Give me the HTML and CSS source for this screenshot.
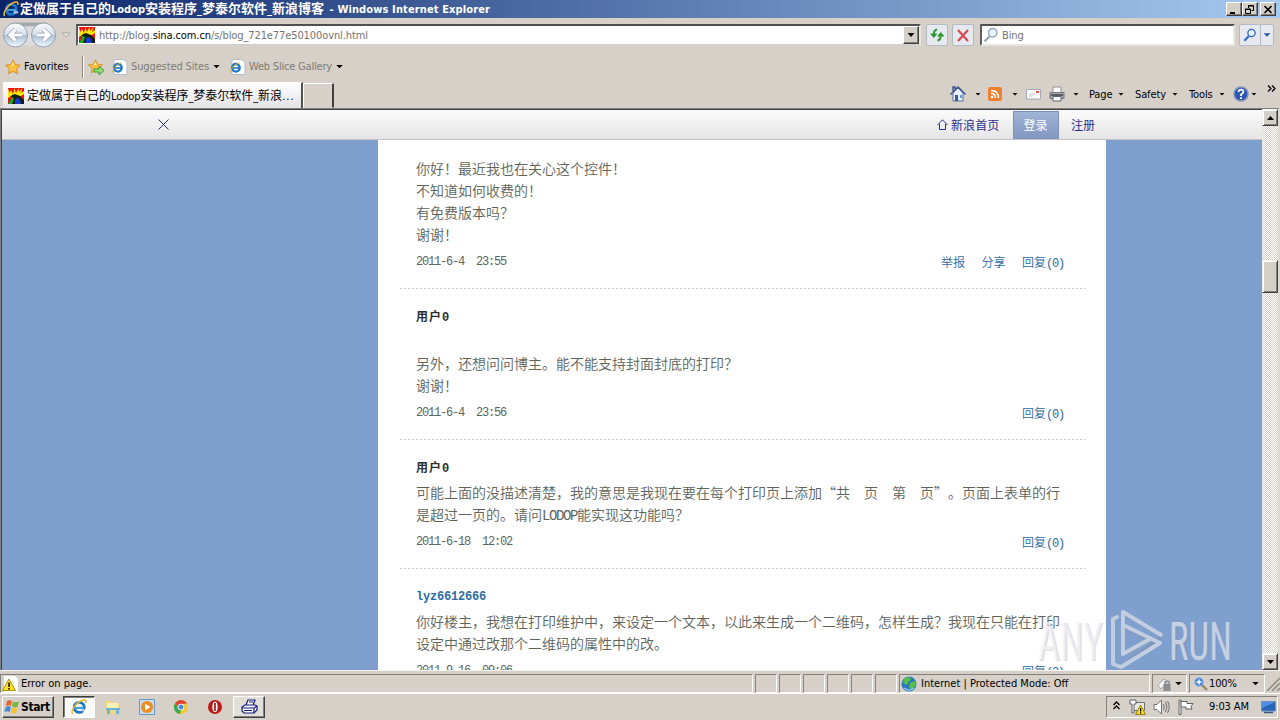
FILE: index.html
```html
<!DOCTYPE html>
<html lang="zh-CN">
<head>
<meta charset="utf-8">
<title>定做属于自己的Lodop安装程序</title>
<link rel="stylesheet" href="styles.css">
</head>
<body>
<svg class="defs" width="0" height="0">
  <symbol id="ie" viewBox="0 0 16 16">
    <circle cx="8.2" cy="8.4" r="5" fill="none" stroke="#1c78c8" stroke-width="2.8"/>
    <path d="M4 9h9" stroke="#3ea0e0" stroke-width="2.2"/>
    <path d="M10.3 10.2h5v2.2h-4.5z" fill="#fff" opacity=".65"/>
    <path d="M1.6 15C-.6 12 4.500 4.500 9.500 2 13 .3 16 .6 14.600 4" fill="none" stroke="#f0b828" stroke-width="1.500"/>
  </symbol>
  <symbol id="iepage" viewBox="0 0 16 16">
    <path d="M2 .5h9.500l3.500 3v12H2z" fill="#fff" stroke="#b4bcc8"/>
    <circle cx="5.900" cy="8.800" r="3.800" fill="none" stroke="#1c78c8" stroke-width="2.300"/>
    <path d="M3 9h6.500" stroke="#1c78c8" stroke-width="1.600"/>
    <path d="M.8 13.500C-.2 11 4 5 9.500 4" fill="none" stroke="#e8b020" stroke-width="1"/>
  </symbol>
  <symbol id="lodop" viewBox="0 0 16 16">
    <path d="M0 0h16v16H0z" fill="#f01010"/>
    <path d="M0 0l1.500 5L3 2l2 4 1.500-6L8 5l2.500-5 .5 4L14.500 0 13 5l3-2v3l-3 2H4L0 10z" fill="#ffe800"/>
    <path d="M0 16v-4l4-5 3-1 5 2 4 4v4z" fill="#102010"/>
    <path d="M0 16l3-7 3 1-2 6z" fill="#10b020"/>
    <path d="M7 16v-4q2-4 5 0l1 4z" fill="#1838d8"/>
    <path d="M0 11l3-3v3l-3 5z" fill="#e81010"/>
  </symbol>
  <symbol id="star" viewBox="0 0 16 16">
    <path d="M8 .8l2.200 4.800 5.200.6-3.900 3.500 1.100 5.200L8 12.300l-4.600 2.600 1.100-5.200L.6 6.200l5.200-.6z" fill="#fcc040" stroke="#d89030"/>
    <path d="M8 3l1.200 3.500H6z" fill="#fff0a0"/>
  </symbol>
  <symbol id="lens" viewBox="0 0 16 16">
    <path d="M6.500 9.500L1.500 14.500" stroke="currentColor" stroke-width="2.400"/>
    <circle cx="9.700" cy="5.700" r="4.200" fill="#eaf4fc" stroke="currentColor" stroke-width="1.500"/>
  </symbol>
</svg>

<header class="titlebar">
  <svg class="i16"><use href="#ie"/></svg>
  <h1 class="title"><span class="han">定做属于自己的</span>Lodop<span class="han">安装程序</span>_<span class="han">梦泰尔软件</span>_<span class="han">新浪博客</span><span class="app"> - Windows Internet Explorer</span></h1>
  <div class="winbtns">
    <span class="wbtn"><svg width="10" height="9"><path d="M1 7h5v2H1z"/></svg></span>
    <span class="wbtn"><svg width="10" height="9" fill="none" stroke="#000"><path d="M3.500 3V.5h5v5H6.500M3 1h6M.5 4.500h5v4h-5zM0 4h6"/></svg></span>
    <span class="wbtn gap"><svg width="10" height="9" stroke="#000" stroke-width="1.700"><path d="M1.500 1l7 7M8.500 1l-7 7"/></svg></span>
  </div>
</header>

<nav class="navrow">
  <svg class="backfwd" width="72" height="28" viewBox="0 0 72 28">
    <defs><linearGradient id="orb" x1="0" y1="0" x2="0" y2="1"><stop offset="0" stop-color="#fdfdfe"/><stop offset=".48" stop-color="#d6dde8"/><stop offset=".52" stop-color="#b0c0d6"/><stop offset="1" stop-color="#eefaff"/></linearGradient></defs>
    <path d="M13 1.500h32L40 6q-9-2-22 0z" fill="#a4a8b0"/>
    <path d="M18 6h22v16q-11 6-22 0z" fill="#dcdde0"/>
    <circle cx="14.500" cy="14" r="12" fill="url(#orb)" stroke="#949fb0"/>
    <circle cx="42.500" cy="14" r="12" fill="url(#orb)" stroke="#949fb0"/>
    <path d="M21 14H9.500M14.500 8.500L9 14l5.500 5.500M36 14H47.500M42.500 8.500l5.500 5.500-5.500 5.500" fill="none" stroke="#8898b4" stroke-width="4.500"/>
    <path d="M21 14H9.500M14.500 8.500L9 14l5.500 5.500M36 14H47.500M42.500 8.500l5.500 5.500-5.500 5.500" fill="none" stroke="#fff" stroke-width="3.200"/>
    <path d="M61 12h8l-4 4z" fill="#e8e6e2" stroke="#aaa8a2"/>
  </svg>
  <div class="address">
    <svg class="i16"><use href="#lodop"/></svg>
    <span class="url">http://blog.<b>sina.com.cn</b>/s/blog_721e77e50100ovnl.html</span>
    <span class="drop"><i class="caret"></i></span>
  </div>
  <span class="tool refresh"><svg width="16" height="16" fill="none" stroke="#2c9a30" stroke-width="2"><path d="M5 8Q4.500 3 8 2.500M11.500 8q.5 5-3 5.500"/><path d="M1 6.500h7.500L4.800 11zM8 9.500h7.500L11.800 5z" fill="#2c9a30" stroke="none"/></svg></span>
  <span class="tool stop"><svg width="16" height="16" stroke="#d84850" stroke-width="2.200"><path d="M3 3l10 11M13 3L3 14"/></svg></span>
  <div class="search"><svg class="i16 pale"><use href="#lens"/></svg><span>Bing</span></div>
  <span class="tool go"><svg class="i14 blue"><use href="#lens"/></svg></span>
  <span class="tool godrop"><i class="caret small navy"></i></span>
</nav>

<div class="favrow">
  <svg class="i16"><use href="#star"/></svg><span class="favlabel">Favorites</span>
  <i class="vline"></i>
  <svg class="i16 addfav" viewBox="0 0 16 16"><use href="#star" width="15" height="15"/><path d="M6 10h5V7l5 4.500-5 4.500v-3H6z" fill="#90e070" stroke="#3c9a38"/></svg>
  <svg class="i16 sug"><use href="#iepage"/></svg><span class="dim w1">Suggested Sites</span><i class="caret small"></i>
  <svg class="i16 web"><use href="#iepage"/></svg><span class="dim w2">Web Slice Gallery</span><i class="caret small"></i>
</div>

<div class="tabrow">
  <div class="tab"><svg class="i16"><use href="#lodop"/></svg><span><span class="han">定做属于自己的</span>Lodop<span class="han">安装程序</span>_<span class="han">梦泰尔软件</span>_<span class="han">新浪</span><span class="dots">...</span></span></div>
  <div class="newtab"></div>
  <div class="commands">
    <div class="cmd c-home"><svg class="i16" viewBox="0 0 16 16"><path d="M3 7v8h10V7L8 2z" fill="#e8f0fa" stroke="#5870a8"/><path d="M.5 8.500L8 1l7.500 7.500M3 5V1h2v2" fill="none" stroke="#405898" stroke-width="1.500"/><path d="M5 9h3v6H5z" fill="#405a98"/><path d="M10 9h2v3h-2z" fill="#58a0e0"/></svg><i class="caret mini"></i></div>
    <div class="cmd c-rss"><svg class="i14" viewBox="0 0 14 14"><rect width="14" height="14" rx="2" fill="#ee8130"/><path d="M3 6.500Q7.500 6.500 7.500 11M3 3.500Q10.500 3.500 10.500 11" fill="none" stroke="#fff" stroke-width="1.600"/><circle cx="4" cy="10" r="1.300" fill="#fff"/></svg><i class="caret mini"></i></div>
    <div class="cmd c-mail"><svg width="15" height="11"><path d="M.5.5h14v9.500H.5z" fill="#fbfbfd" stroke="#a8a8b4"/><path d="M3 5h6M3 7h4" stroke="#c8c8d4"/><path d="M10 2h3v2h-3z" fill="#e05050"/></svg></div>
    <div class="cmd c-print"><svg class="i16" viewBox="0 0 16 16"><path d="M4 1h8v6H4z" fill="#fff" stroke="#909090"/><path d="M1 6.500h14v6H1z" fill="#a4a8ae" stroke="#74787e"/><path d="M2 9h12" stroke="#404448" stroke-width="1.500"/><path d="M4 10.500h8v4.500H4z" fill="#f4f8fc" stroke="#606870"/></svg><i class="caret mini"></i></div>
    <div class="cmd c-page"><span>Page</span><i class="caret mini"></i></div>
    <div class="cmd c-safety"><span>Safety</span><i class="caret mini"></i></div>
    <div class="cmd c-tools"><span>Tools</span><i class="caret mini"></i></div>
    <div class="cmd c-help"><svg class="i16" viewBox="0 0 16 16"><circle cx="8" cy="8" r="7" fill="#2c58b4" stroke="#8496b8" stroke-width="1.500"/><path d="M5.500 6Q5.700 3.600 8 3.600t2.400 2.200Q10.400 7.200 8 8.500V10" fill="none" stroke="#fff" stroke-width="1.800"/><path d="M7 11.200h2V13H7z" fill="#fff"/></svg><i class="caret mini"></i></div>
    <svg class="more" width="9" height="7" fill="none" stroke="#000" stroke-width="1.300"><path d="M1 .5l3 3-3 3M5 .5l3 3-3 3"/></svg>
  </div>
</div>

<div class="viewport">
  <div class="page">
    <div class="sinabar">
      <svg class="close" width="11" height="11" stroke="#2b2f8c"><path d="M.5.5l10 10M10.500.5l-10 10"/></svg>
      <svg class="house" width="11" height="11" fill="none" stroke="#2b2f8c"><path d="M.5 6L5.500.8 10.500 6M2.500 5v5.500h6V5"/></svg>
      <a class="home">新浪首页</a>
      <a class="login">登录</a>
      <a class="reg">注册</a>
    </div>
    <main class="comments">
      <article class="comment first">
        <div class="text">你好！最近我也在关心这个控件！<br>不知道如何收费的！<br>有免费版本吗？<br>谢谢！</div>
        <div class="meta"><time>2011-6-4&nbsp; 23:55</time><span class="links"><a>举报</a><a>分享</a><a>回复<em>(0)</em></a></span></div>
      </article>
      <article class="comment">
        <div class="name">用户<em>0</em></div>
        <div class="text"><br>另外，还想问问博主。能不能支持封面封底的打印？<br>谢谢！</div>
        <div class="meta"><time>2011-6-4&nbsp; 23:56</time><span class="links"><a>回复<em>(0)</em></a></span></div>
      </article>
      <article class="comment">
        <div class="name">用户<em>0</em></div>
        <div class="text">可能上面的没描述清楚，我的意思是我现在要在每个打印页上添加“共　页　第　页”。页面上表单的行<br>是超过一页的。请问<em>LODOP</em>能实现这功能吗？</div>
        <div class="meta"><time>2011-6-18&nbsp; 12:02</time><span class="links"><a>回复<em>(0)</em></a></span></div>
      </article>
      <article class="comment">
        <div class="name member"><em>lyz6612666</em></div>
        <div class="text">你好楼主，我想在打印维护中，来设定一个文本，以此来生成一个二维码，怎样生成？我现在只能在打印<br>设定中通过改那个二维码的属性中的改。</div>
        <div class="meta"><time>2011-9-16&nbsp; 09:06</time><span class="links"><a>回复<em>(2)</em></a></span></div>
      </article>
    </main>
  </div>
  <div class="scroll">
    <span class="sbtn"><svg width="7" height="4"><path d="M0 4h7L3.500 0z"/></svg></span>
    <span class="thumb"></span>
    <span class="sbtn end"><svg width="7" height="4"><path d="M0 0h7L3.500 4z"/></svg></span>
  </div>
  <svg class="watermark" width="200" height="61" viewBox="0 0 200 61">
    <g class="shade">
      <text x="2" y="52" textLength="65" lengthAdjust="spacingAndGlyphs">ANY</text>
      <text x="134" y="52" textLength="62" lengthAdjust="spacingAndGlyphs">RUN</text>
      <path d="M87 46V4L125 27 84 58 76 55V10l4-2M87 17L119 34M87 46L111 31"/>
    </g>
    <g class="glow">
      <text x="0" y="51" textLength="66" lengthAdjust="spacingAndGlyphs">ANY</text>
      <text x="132" y="51" textLength="63" lengthAdjust="spacingAndGlyphs">RUN</text>
      <path d="M86 45V3L124 26 M86 16L123 34 84 58 76 55V10l4-2M86 45L113 30"/>
    </g>
  </svg>
</div>

<footer class="status">
  <div class="pane p-error"><svg class="i16" viewBox="0 0 16 16"><path d="M2 0h11l3 3v13H2z" fill="#fff"/><path d="M7 3l6.500 11.500H.5z" fill="#ffe020" stroke="#b09010"/><path d="M6.300 6.500h1.500V11H6.300zM6.300 12h1.500v1.500H6.300z"/></svg><span>Error on page.</span></div>
  <div class="pane p-s"></div><div class="pane p-s"></div><div class="pane p-s"></div><div class="pane p-s"></div><div class="pane p-s"></div><div class="pane p-s"></div>
  <div class="pane p-zone"><svg class="i16" viewBox="0 0 16 16"><circle cx="8" cy="8" r="7.500" fill="#2878b8"/><path d="M3 3q3-2.500 6-2l1 3-3 2-1 3-4-2zM9 7l5-2 1 4-4 5-3-3z" fill="#58c048"/><path d="M3 12q5 4 10 0" fill="none" stroke="#88c8f0" stroke-width="1.500"/></svg><span>Internet | Protected Mode: Off</span></div>
  <div class="pane p-lock"><svg class="i16" viewBox="0 0 16 16"><path d="M2 9l6-6 4 2-7 8z" fill="#f4f4f4" stroke="#a8a8a8"/><path d="M7.500 8h7v7h-7z" fill="#8c8c8c"/><path d="M9 8V5.500h4V8" fill="none" stroke="#8c8c8c" stroke-width="1.400"/></svg><i class="caret small"></i></div>
  <div class="pane p-zoom"><svg class="i14" viewBox="0 0 14 14"><path d="M7.500 7.500L13 13" stroke="#9a8468" stroke-width="2.400"/><circle cx="5" cy="5" r="4.200" fill="#3c80e0" stroke="#88aee0"/><path d="M2.500 5h5M5 2.500v5" stroke="#fff" stroke-width="1.500"/></svg><span>100%</span><i class="caret small"></i></div>
  <svg class="grip" width="14" height="14" stroke="#8c8880" stroke-width="1.500"><path d="M1 14L14 1M6 14l8-8M11 14l3-3"/></svg>
</footer>

<div class="taskbar">
  <div class="start"><svg class="i16" viewBox="0 0 16 16"><path d="M3 2q2.500-1.500 5 0L7 7Q4.500 5.500 2 7z" fill="#e8622c"/><path d="M9 2.500q2.500 1.500 6 0L13.500 8Q11 9 8 7.500z" fill="#7ab83c"/><path d="M1.800 8q2.500-1.500 5 0l-1 5Q3.500 11.500.5 13z" fill="#3c8cdc"/><path d="M7.800 8.500q2.500 1.500 5.500.5L12 14q-2.500 1.200-5.200-.5z" fill="#f8c030"/></svg><span>Start</span></div>
  <div class="task active"><svg class="i16"><use href="#ie"/></svg></div>
  <div class="quick"><svg class="i16" viewBox="0 0 16 16"><path d="M1 2h6l1 2h6v11H1z" fill="#f4d880"/><path d="M2 4h11v5H2z" fill="#fcf0b8"/><path d="M1 9h14v2H1zM2 11h3v4H2zM11 11h3v4h-3z" fill="#68b4dc"/></svg></div>
  <div class="quick"><svg class="i16" viewBox="0 0 16 16"><path d="M.5.500h15v15H.5z" fill="#c8dcf0" stroke="#6898cc"/><circle cx="8" cy="8" r="6" fill="#f08a1c"/><path d="M6 4.500L11.500 8 6 11.500z" fill="#fff"/></svg></div>
  <div class="quick"><svg class="i14" viewBox="0 0 14 14"><circle cx="7" cy="7" r="7" fill="#f0c830"/><path d="M1 3.300A7 7 0 0 1 13 3.600L7 4 5 9z" fill="#e04438"/><path d="M1 3.300l3.200 5.400L7 10l-1 4A7 7 0 0 1 1 3.300z" fill="#38a850"/><circle cx="7" cy="7" r="3.200" fill="#fff"/><circle cx="7" cy="7" r="2.500" fill="#4a88e8"/></svg></div>
  <div class="quick"><svg class="i14" viewBox="0 0 14 14"><circle cx="7" cy="7" r="7" fill="#c01818"/><ellipse cx="7" cy="7" rx="2.600" ry="5.200" fill="#fff"/><path d="M6.200 3h1.600v8H6.200z" fill="#901010"/></svg></div>
  <div class="task raised"><svg width="17" height="16" viewBox="0 0 17 16" fill="#fff" stroke="#101878" stroke-width="1.200"><path d="M5 6l2-5h7l-2 5"/><path d="M1 8l3-2h10l2 1v4l-3 3H3l-2-2z"/><path d="M1 9h12l3-2M13 9v5M3 11.500h8M8 3h4" fill="none"/></svg></div>
  <div class="tray">
    <svg class="chev" width="7" height="9" fill="none" stroke="#000" stroke-width="1.300"><path d="M.5 4l3-3 3 3M.5 8l3-3 3 3"/></svg>
    <svg class="net" width="17" height="16" viewBox="0 0 17 16"><path d="M4.500 3.500h11v8h-11z" fill="#e8e8e8" stroke="#707070"/><path d="M1 1h6v4H5v9H3V5H1z" fill="#fff" stroke="#606060"/><path d="M11.500 6l5 9.500h-10z" fill="#f8d820" stroke="#a08010"/><path d="M11 9h1.200v3.500H11zM11 13.300h1.200v1.200H11z"/></svg>
    <svg class="vol" width="17" height="16" viewBox="0 0 17 16" fill="#fff" stroke="#707070"><path d="M1 5.500h3L8.500 1v14L4 10.500H1z"/><path d="M10.500 5q1.500 3 0 6M12.500 3q3 5 0 10M14.500 2q3.500 6 0 12" fill="none"/></svg>
    <svg class="flag" width="16" height="16" viewBox="0 0 16 16" fill="#fff" stroke="#606060"><path d="M1 1h2v14.500H1z"/><path d="M3 2.500h6v2h6l-2 3 1 2.500H8V8H3z"/></svg>
    <span>9:03 AM</span>
    <svg class="desk" width="15" height="13" viewBox="0 0 15 13"><path d="M.5.500h14v9.500H.5z" fill="#2864b8" stroke="#6890c8"/><path d="M1 1h13L1 7z" fill="#5090e0"/><path d="M3 11.500h9" stroke="#405878" stroke-width="1.500"/></svg>
  </div>
</div>
</body>
</html>
```
FILE: styles.css
```css
* { box-sizing: border-box; }
body {
  margin: 0; width: 1280px; height: 720px; overflow: hidden;
  display: flex; flex-direction: column;
  background: #d6d0c9; color: #000;
  font: 11px/14px "DejaVu Sans Condensed", "DejaVu Sans", "Noto Sans CJK SC", sans-serif;
  font-stretch: condensed; letter-spacing: -0.12px; white-space: nowrap;
}
svg { display: block; flex: none; }
.defs { position: absolute; }
.i16 { width: 16px; height: 16px; }
.i14 { width: 14px; height: 14px; }
em { font-style: normal; }
.han { font-family: "Noto Sans CJK SC", sans-serif; font-size: 12px; letter-spacing: 0; }
.caret { flex: none; width: 7px; height: 4px; background: #000; clip-path: polygon(0 0, 100% 0, 50% 100%); }
.caret.small { height: 3.5px; }
.caret.mini { width: 6px; height: 3px; }
.navy { background: #2858a8; }

/* window title */
.titlebar { flex: none; height: 18px; display: flex; align-items: center; padding: 0 4px 0 3px; background: linear-gradient(90deg, #0a246a, #a6caf0); color: #fff; }
.title { flex: 1; margin: 0 0 0 1px; font-size: 11px; line-height: 18px; letter-spacing: 0; }
.title .han { font-size: 13px; line-height: 16px; }
.app { letter-spacing: 0.12px; margin-left: 2px; }
.winbtns { display: flex; }
.wbtn { width: 16px; height: 14px; display: flex; align-items: center; justify-content: center; background: #d4d0c8; border: 1px solid; border-color: #fff #404040 #404040 #fff; box-shadow: inset -1px -1px #808080; }
.wbtn.gap { margin-left: 2px; }

/* address row */
.navrow { flex: none; height: 34px; display: flex; align-items: center; padding: 0 0 0 1px; }
.address { width: 845px; height: 22px; margin-left: 3px; display: flex; align-items: center; background: #fff; border: 2px solid; border-color: #505050 #e8e6e0 #d4d0c8 #606060; padding-left: 1px; }
.url { flex: 1; margin: 1px 0 0 4px; color: #747474; letter-spacing: -0.1px; }
.url b { font-weight: 400; color: #000; }
.drop { width: 16px; height: 18px; display: flex; align-items: center; justify-content: center; background: #d4d0c8; border: 1px solid; border-color: #fff #404040 #404040 #fff; box-shadow: inset -1px -1px #808080; }
.tool { width: 22px; height: 22px; display: flex; align-items: center; justify-content: center; background: #e6eaf0; border: 1px solid #b4bac4; border-radius: 2px; }
.refresh { margin-left: 5px; }
.stop { margin-left: 4px; }
.search { width: 255px; height: 22px; margin-left: 6px; display: flex; align-items: center; background: #fff; border: 2px solid; border-color: #505050 #e8e6e0 #e8e6e0 #606060; padding-left: 1px; color: #747474; }
.search span { margin: 1px 0 0 3px; }
.pale { color: #98a8bc; }
.blue { color: #2c68d0; }
.go { margin-left: 4px; }
.godrop { width: 14px; margin-left: -1px; }

/* favourites row */
.favrow { flex: none; height: 28px; display: flex; align-items: center; padding: 1px 0 0 5px; }
.favlabel { width: 46px; margin-left: 3px; letter-spacing: 0; }
.vline { width: 2px; height: 22px; margin-left: 12px; border-left: 1px solid #8c8880; border-right: 1px solid #fff; }
.addfav { margin-left: 4px; }
.sug { margin-left: 8px; }
.web { margin-left: 10px; }
.dim { color: #807c76; margin-left: 3px; }
.w1 { width: 82px; }
.w2 { width: 87px; letter-spacing: -0.2px; }

/* tabs and command bar */
.tabrow { flex: none; height: 28px; display: flex; align-items: flex-end; }
.tab { width: 300px; height: 26px; margin-left: 3px; display: flex; align-items: center; padding-left: 5px; background: linear-gradient(#fff, #e2e2e6); border-right: 2px solid #505050; border-top: 1px solid #fff; }
.tab > span { margin-left: 3px; }
.dots { letter-spacing: 1px; }
.newtab { width: 31px; height: 25px; border: 1px solid; border-color: #fff #404040 transparent #fff; border-right-width: 2px; }
.commands { width: 946px; height: 28px; display: flex; align-items: center; padding-left: 616px; }
.cmd { display: flex; align-items: center; justify-content: space-between; flex: none; }
.cmd span { margin-top: 1px; }
.c-home { width: 31px; }
.c-rss { width: 30px; margin-left: 7px; }
.c-mail { margin-left: 8px; }
.c-print { width: 30px; margin-left: 8px; }
.c-page { width: 35px; margin-left: 10px; }
.c-safety { width: 43px; margin-left: 11px; }
.c-tools { width: 36px; margin-left: 11px; }
.c-help { width: 24px; margin-left: 8px; }
.more { margin: -12px 0 0 10px; }

/* browser viewport */
.viewport { position: relative; flex: none; height: 562px; display: flex; border-top: 1px solid #808080; border-left: 1px solid #808080; border-right: 2px solid #dedad2; }
.page { width: 1261px; height: 561px; display: flex; flex-direction: column; align-items: stretch; background: #7fa0cf; border-top: 1px solid #404040; border-left: 1px solid #404040; overflow: hidden; }
.sinabar { flex: none; height: 30px; display: flex; align-items: center; background: linear-gradient(#fbfbfb, #e5e5e6); border-bottom: 1px solid #c4c4c6; font: 12px/28px "Noto Sans CJK SC", sans-serif; letter-spacing: 0.1px; color: #2b2f8c; }
.close { margin-left: 156px; }
.house { margin-left: 768px; }
.home { margin-left: 3px; width: 48px; }
.login { align-self: flex-end; width: 46px; height: 28px; margin-left: 14px; padding-right: 1px; text-align: center; line-height: 26px; color: #fff; background: linear-gradient(#9fb4d6, #8496c2); border: 1px solid #7c90bc; border-bottom: 0; }
.reg { margin-left: 12px; }
.comments { flex: none; width: 728px; margin-left: 376px; padding: 0 21px 0 22px; background: #fff; }
.comment { padding: 15px 21px 16px 16px; border-bottom: 1px solid transparent; background: repeating-linear-gradient(90deg, #c8c8c8 0 2px, transparent 2px 4px) left bottom / 100% 1px no-repeat border-box; font: 14px/22px "Noto Sans CJK SC", sans-serif; font-weight: 350; letter-spacing: 0; text-spacing-trim: space-all; color: #5c645c; }
.comment.first { padding-top: 17px; }
.name { height: 22px; margin-bottom: 4px; font-size: 12px; line-height: 24px; font-weight: 700; letter-spacing: 1px; color: #2c302c; }
.name.member { color: #2c6ca4; }
.text em { font: 14px/1 "Liberation Mono", monospace; letter-spacing: -1.4px; }
.meta { height: 22px; margin-top: 5px; display: flex; justify-content: space-between; font-size: 12px; line-height: 23px; }
time, .meta em, .name em { font-family: "Liberation Mono", monospace; font-size: 12px; line-height: 1; letter-spacing: -1.2px; }
time { line-height: 25px; }
.name em { letter-spacing: -0.2px; }
.name.member { line-height: 22px; }
.links { display: flex; gap: 16.5px; color: #2c68a4; }

.scroll { width: 16px; height: 561px; display: flex; flex-direction: column; background: repeating-conic-gradient(#fff 0 25%, #d4d0c8 0 50%) 0 0 / 2px 2px; }
.sbtn, .thumb { flex: none; width: 16px; height: 17px; display: flex; align-items: center; justify-content: center; background: #d4d0c8; border: 1px solid; border-color: #f4f2ee #404040 #404040 #f4f2ee; box-shadow: inset 1px 1px #fff, inset -1px -1px #808080; }
.thumb { height: 33px; margin-top: 134px; }
.sbtn.end { margin-top: auto; }

/* floating brand mark over the page corner */
.watermark { position: absolute; left: 1036px; top: 500px; }
.watermark text { font-family: Roboto, sans-serif; font-size: 53px; font-weight: 400; letter-spacing: 0; }
.watermark path { fill: none; stroke-width: 4; stroke-linejoin: round; stroke-linecap: round; }
.shade { fill: #80808a; opacity: .25; }
.shade path { stroke: #80808a; }
.glow { fill: #f6f6fa; opacity: .6; }
.glow path { stroke: #f0f2f6; }

/* status bar */
.status { flex: none; height: 24px; display: flex; gap: 2px; padding: 3px 0 2px; border-top: 1px solid #f4f2ee; border-bottom: 1px solid #fff; }
.pane { flex: none; height: 19px; display: flex; align-items: center; border: 1px solid; border-color: #84807a #fff #fff #84807a; }
.p-error { width: 753px; padding-left: 1px; }
.p-error span { margin-left: 3px; letter-spacing: 0; }
.p-s { width: 22px; }
.p-zone { width: 251px; padding-left: 1px; }
.p-zone span { margin-left: 4px; letter-spacing: 0; }
.p-lock { width: 35px; padding: 0 4px 0 3px; justify-content: space-between; }
.p-zoom { width: 76px; padding-left: 4px; }
.p-zoom span { margin-left: 1px; width: 43px; }
.grip { align-self: flex-end; margin-left: -1px; }

/* taskbar */
.taskbar { flex: none; height: 26px; display: flex; align-items: center; padding: 0 2px; }
.start { width: 52px; height: 22px; display: flex; align-items: center; padding-left: 1px; font-weight: 700; font-size: 12px; letter-spacing: -0.4px; border: 1px solid; border-color: #fff #404040 #404040 #fff; box-shadow: inset -1px -1px #808080; }
.start span { margin-left: 1px; }
.task { width: 32px; height: 22px; display: flex; align-items: center; justify-content: center; border: 1px solid; }
.active { margin: 0 9px 0 9px; background: #fbfbfa; border-color: #404040 #fff #fff #404040; box-shadow: inset 1px 1px #808080; }
.quick { width: 18px; margin-right: 16px; display: flex; justify-content: center; }
.raised { margin-left: -7px; background: #e2dfd9; border-color: #fff #404040 #404040 #fff; box-shadow: inset -1px -1px #808080; }
.tray { width: 172px; height: 22px; margin-left: auto; display: flex; align-items: center; padding-left: 6px; border: 1px solid; border-color: #84807a #fff #fff #84807a; }
.chev { margin-top: -3px; }
.net { margin-left: 9px; }
.vol { margin-left: 7px; }
.flag { margin-left: 8px; }
.tray span { margin-left: 15px; width: 42px; }
.desk { margin-left: 10px; }
```
